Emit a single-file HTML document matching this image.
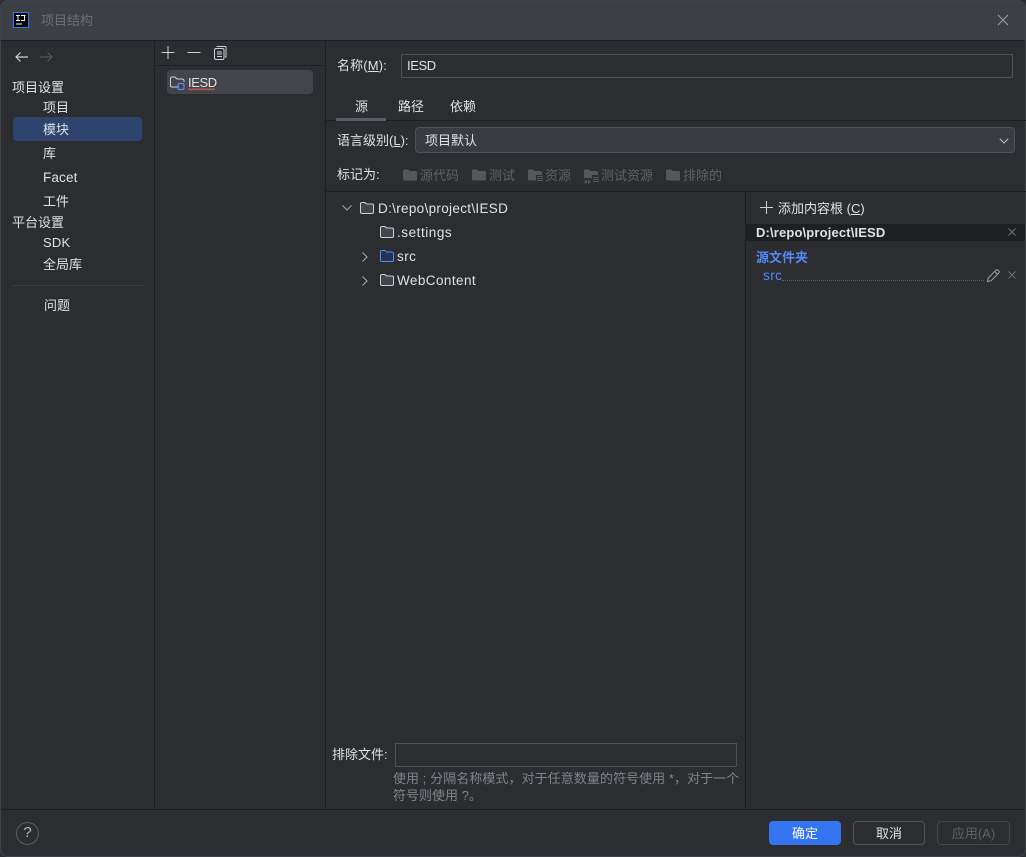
<!DOCTYPE html>
<html lang="zh"><head><meta charset="utf-8"><title>项目结构</title>
<style>
html,body{margin:0;padding:0;width:1026px;height:857px;overflow:hidden;background:#2b2d30}
body{position:relative;font-family:"Liberation Sans","Noto Sans CJK SC",sans-serif;font-size:13px;color:#dfe1e5}
.t{position:absolute;white-space:nowrap;line-height:18px;height:18px;margin-top:1px}
.b{position:absolute}
.h{background:#1e1f22;height:1px}
.v{background:#1e1f22;width:1px}
.d{color:#5f6165}
svg{position:absolute;overflow:visible}
u{text-underline-offset:1px}
</style></head><body>
<div class="b" style="left:0;top:0;width:1026px;height:40px;background:#3c3f43;border-radius:8px 8px 0 0"></div>
<div class="b h" style="left:0;top:40px;width:1026px"></div>
<div class="b" style="left:0;top:0;width:1024px;height:855px;border:1px solid #404247;border-radius:8px"></div>

<svg style="left:13px;top:12px" width="16" height="16" shape-rendering="crispEdges"><rect x=".5" y=".5" width="15" height="15" fill="#000" stroke="#1f7fff"/><path d="M3 3.500h4M5 4v5M3 8.500h4M8 3.500h4.500M11.500 4v4.500M8 8.500h4" stroke="#fff" stroke-width="1.200" fill="none"/><path d="M3 12h6" stroke="#fff" stroke-width="1.200"/></svg>
<div class="t" style="left:41px;top:11px;color:#6c6f75">项目结构</div>
<svg style="left:997px;top:14px" width="12" height="12"><path d="M1 1l10 10M11 1L1 11" stroke="#9a9da1" stroke-width="1.100"/></svg>

<div class="b v" style="left:154px;top:41px;height:768px"></div>
<div class="b v" style="left:325px;top:41px;height:768px"></div>
<div class="b v" style="left:745px;top:192px;height:617px"></div>
<div class="b h" style="left:155px;top:65px;width:170px"></div>
<div class="b h" style="left:326px;top:120px;width:700px"></div>
<div class="b h" style="left:326px;top:191px;width:700px"></div>
<div class="b h" style="left:1px;top:809px;width:1024px"></div>

<svg style="left:14px;top:51px" width="14" height="12"><path d="M14 6H2M6.500 1.500L2 6l4.500 4.500" stroke="#ced0d6" stroke-width="1.200" fill="none"/></svg>
<svg style="left:40px;top:51px" width="14" height="12"><path d="M0 6h12M7.500 1.500L12 6l-4.500 4.500" stroke="#55575c" stroke-width="1.200" fill="none"/></svg>

<div class="t" style="left:12px;top:78px">项目设置</div>
<div class="t" style="left:43px;top:98px">项目</div>
<div class="b" style="left:13px;top:117px;width:129px;height:24px;background:#2e436e;border-radius:4px"></div>
<div class="t" style="left:43px;top:120px">模块</div>
<div class="t" style="left:43px;top:144px">库</div>
<div class="t" style="left:43px;top:168px;font-size:13.5px;letter-spacing:.15px">Facet</div>
<div class="t" style="left:43px;top:192px">工件</div>
<div class="t" style="left:12px;top:213px">平台设置</div>
<div class="t" style="left:43px;top:233px;letter-spacing:.2px">SDK</div>
<div class="t" style="left:43px;top:255px">全局库</div>
<div class="b" style="left:12px;top:285px;width:132px;height:1px;background:#393b40"></div>
<div class="t" style="left:44px;top:296px">问题</div>

<svg style="left:161px;top:46px" width="14" height="14"><path d="M7 0v13M.5 6.500h13" stroke="#ced0d6" stroke-width="1"/></svg>
<svg style="left:187px;top:46px" width="14" height="14"><path d="M.5 6.500h13" stroke="#ced0d6" stroke-width="1"/></svg>
<svg style="left:214px;top:46px" width="13" height="14"><rect x=".5" y="2.500" width="9.500" height="11" rx="1.500" fill="#2b2d30" stroke="#ced0d6"/><path d="M3 1V.5h8.500l.5.500v10h-1M3 6h5M3 8h5M3 10.500h5" stroke="#ced0d6" fill="none"/></svg>

<div class="b" style="left:167px;top:70px;width:146px;height:24px;background:#43454a;border-radius:4px"></div>
<svg style="left:170px;top:76px" width="16" height="15"><path d="M9 11H2q-1.500 0-1.500-1.500v-7Q.5 1 2 1h3l2 2h5q2 0 2 2v1" stroke="#ced0d6" fill="none"/><rect x="8" y="7.500" width="6" height="6" rx="1.500" fill="none" stroke="#548af7" stroke-width="1.200"/></svg>
<div class="t" style="left:188px;top:73px;letter-spacing:-.4px">IESD</div>
<svg style="left:188px;top:88px" width="28" height="4"><path d="M0 2l1.500-1.500L3 2l1.500-1.500L6 2l1.500-1.500L9 2l1.500-1.500L12 2l1.500-1.500L15 2l1.500-1.500L18 2l1.500-1.500L21 2l1.500-1.500L24 2l1.500-1.500L27 2" stroke="#c75450" fill="none"/></svg>

<div class="t" style="left:337px;top:56px;letter-spacing:.15px">名称(<u>M</u>):</div>
<div class="b" style="left:401px;top:54px;width:610px;height:22px;border:1px solid #4e5157"></div>
<div class="t" style="left:407px;top:56px;letter-spacing:-.4px">IESD</div>

<div class="t" style="left:355px;top:97px">源</div>
<div class="b" style="left:336px;top:118px;width:50px;height:3px;background:#5a5d63"></div>
<div class="t" style="left:398px;top:97px">路径</div>
<div class="t" style="left:450px;top:97px">依赖</div>

<div class="t" style="left:337px;top:131px">语言级别(<u>L</u>):</div>
<div class="b" style="left:415px;top:127px;width:598px;height:24px;background:#393b40;border:1px solid #4e5157;border-radius:4px"></div>
<div class="t" style="left:425px;top:131px">项目默认</div>
<svg style="left:999px;top:138px" width="10" height="6"><path d="M.8.800L5 5 9.200.800" stroke="#b4b8bf" stroke-width="1.100" fill="none"/></svg>

<div class="t" style="left:337px;top:165px">标记为:</div>
<svg style="left:403px;top:169px" width="14" height="12"><path d="M0 2q0-1.500 1.500-1.500H5L6.500 2h6Q14 2 14 3.500v7q0 1-1.500 1h-11Q0 11.500 0 10z" fill="#55575b"/></svg>
<div class="t d" style="left:420px;top:166px">源代码</div>
<svg style="left:472px;top:169px" width="14" height="12"><path d="M0 2q0-1.500 1.500-1.500H5L6.500 2h6Q14 2 14 3.500v7q0 1-1.500 1h-11Q0 11.500 0 10z" fill="#55575b"/></svg>
<div class="t d" style="left:489px;top:166px">测试</div>
<svg style="left:528px;top:169px" width="15" height="14"><path d="M0 2q0-1.500 1.500-1.500H5L6.500 2h6Q14 2 14 3.500V6H8v5.500H1.500Q0 11.500 0 10z" fill="#55575b"/><path d="M9 7.500h6M9 9.500h6M9 11.500h6" stroke="#55575b"/></svg>
<div class="t d" style="left:545px;top:166px">资源</div>
<svg style="left:584px;top:169px" width="15" height="15"><path d="M0 2q0-1.500 1.500-1.500H5L6.500 2h6Q14 2 14 3.500V6H0z" fill="#55575b"/><path d="M0 6h8v3H0z" fill="#55575b"/><path d="M4 10.500l3 2.500-3 2zM3 10.500L0 13l3 2z" fill="#55575b"/><path d="M9 8.500h6M9 10.500h6M9 12.500h6" stroke="#55575b"/></svg>
<div class="t d" style="left:601px;top:166px">测试资源</div>
<svg style="left:666px;top:169px" width="14" height="12"><path d="M0 2q0-1.500 1.500-1.500H5L6.500 2h6Q14 2 14 3.500v7q0 1-1.500 1h-11Q0 11.500 0 10z" fill="#55575b"/></svg>
<div class="t d" style="left:683px;top:166px">排除的</div>

<svg style="left:342px;top:205px" width="10" height="6"><path d="M.5.500L5 5 9.500.500" stroke="#9da0a8" stroke-width="1.100" fill="none"/></svg>
<svg style="left:360px;top:202px" width="14" height="12"><path d="M.5 2Q.5.500 2 .500h3L6.500 2H12q1.500 0 1.500 1.500V10q0 1.500-1.500 1.500H2Q.5 11.500.5 10z" fill="#43454a" stroke="#ced0d6"/></svg>
<div class="t" style="left:378px;top:199px;font-size:13.5px;letter-spacing:.32px">D:\repo\project\IESD</div>
<svg style="left:380px;top:226px" width="14" height="12"><path d="M.5 2Q.5.500 2 .500h3L6.500 2H12q1.500 0 1.500 1.500V10q0 1.500-1.500 1.500H2Q.5 11.500.5 10z" fill="#43454a" stroke="#ced0d6"/></svg>
<div class="t" style="left:397px;top:223px;font-size:13.5px;letter-spacing:.55px">.settings</div>
<svg style="left:362px;top:252px" width="6" height="10"><path d="M.5.500L5 5 .5 9.500" stroke="#9da0a8" stroke-width="1.100" fill="none"/></svg>
<svg style="left:380px;top:250px" width="14" height="12"><path d="M.5 2Q.5.500 2 .500h3L6.500 2H12q1.500 0 1.500 1.500V10q0 1.500-1.500 1.500H2Q.5 11.500.5 10z" fill="#25324d" stroke="#548af7"/></svg>
<div class="t" style="left:397px;top:247px;font-size:13.5px;letter-spacing:.45px">src</div>
<svg style="left:362px;top:276px" width="6" height="10"><path d="M.5.500L5 5 .5 9.500" stroke="#9da0a8" stroke-width="1.100" fill="none"/></svg>
<svg style="left:380px;top:274px" width="14" height="12"><path d="M.5 2Q.5.500 2 .500h3L6.500 2H12q1.500 0 1.500 1.500V10q0 1.500-1.500 1.500H2Q.5 11.500.5 10z" fill="#43454a" stroke="#ced0d6"/></svg>
<div class="t" style="left:397px;top:271px;font-size:13.5px;letter-spacing:.43px">WebContent</div>

<svg style="left:760px;top:201px" width="13" height="13"><path d="M6.500 0v13M0 6.500h13" stroke="#ced0d6"/></svg>
<div class="t" style="left:778px;top:199px">添加内容根 (<u>C</u>)</div>
<div class="b" style="left:746px;top:224px;width:279px;height:17px;background:#1e1f22"></div>
<div class="t" style="left:756px;top:223px;font-weight:bold;letter-spacing:.15px">D:\repo\project\IESD</div>
<svg style="left:1008px;top:228px" width="8" height="8"><path d="M.5.500l7 7M7.500.500l-7 7" stroke="#6f7277"/></svg>
<div class="t" style="left:756px;top:248px;color:#548af7;font-weight:bold">源文件夹</div>
<div class="t" style="left:763px;top:266px;color:#548af7;font-size:13.5px;letter-spacing:.45px">src</div>
<div class="b" style="left:782px;top:280px;width:202px;border-top:1px dotted #5a5d63"></div>
<svg style="left:987px;top:269px" width="13" height="13"><path d="M.5 12.500l.7-3.500L9 1.200q1-1 2 0l.8.800q1 1 0 2L4 11.800zM7.800 2.500l2.700 2.700" stroke="#9da0a8" fill="none"/></svg>
<svg style="left:1008px;top:271px" width="8" height="8"><path d="M.5.500l7 7M7.500.500l-7 7" stroke="#6f7277"/></svg>

<div class="t" style="left:332px;top:745px">排除文件:</div>
<div class="b" style="left:395px;top:743px;width:340px;height:22px;border:1px solid #4e5157"></div>
<div class="t" style="left:393px;top:769px;color:#808389;letter-spacing:.06px">使用 ; 分隔名称模式，对于任意数量的符号使用 *，对于一个</div>
<div class="t" style="left:393px;top:786px;color:#808389">符号则使用 ?。</div>

<div class="b" style="left:16px;top:822px;width:21px;height:21px;border:1px solid #5a5d63;border-radius:50%"></div>
<div class="t" style="left:16px;top:823px;width:23px;text-align:center;color:#b4b8bf;font-size:15px">?</div>

<div class="b" style="left:769px;top:821px;width:72px;height:24px;background:#3574f0;border-radius:4px"></div>
<div class="t" style="left:769px;top:824px;width:72px;text-align:center;color:#fff">确定</div>
<div class="b" style="left:853px;top:821px;width:70px;height:22px;border:1px solid #4e5157;border-radius:4px"></div>
<div class="t" style="left:853px;top:824px;width:72px;text-align:center">取消</div>
<div class="b" style="left:937px;top:821px;width:71px;height:22px;border:1px solid #43454a;border-radius:4px"></div>
<div class="t" style="left:937px;top:824px;width:73px;text-align:center;color:#5f6165">应用(A)</div>
</body></html>
